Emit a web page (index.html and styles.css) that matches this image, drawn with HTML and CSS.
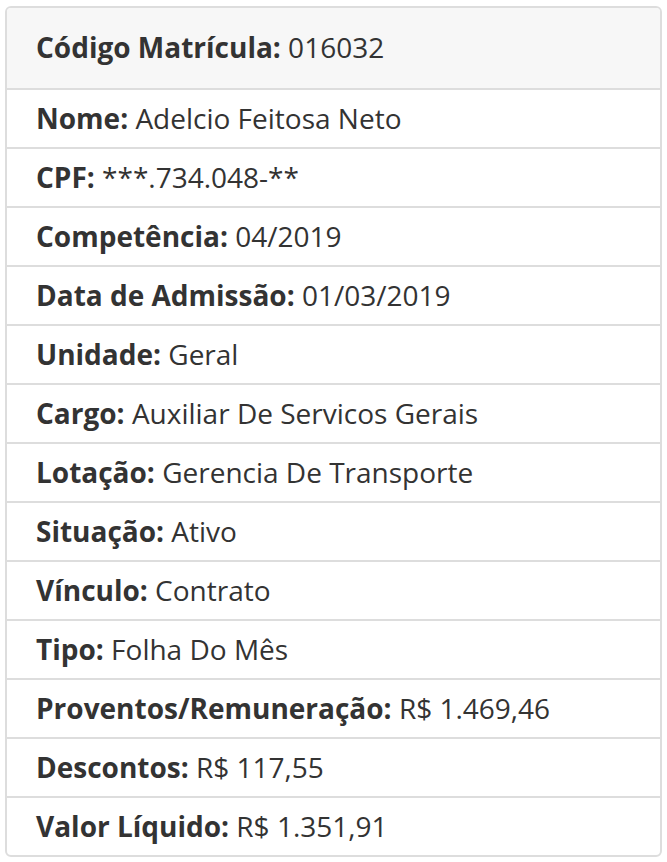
FILE: index.html
```html
<!DOCTYPE html>
<html lang="pt-BR">
<head>
<meta charset="utf-8">
<title>Contracheque</title>
<link rel="stylesheet" href="styles.css">
</head>
<body>
<div class="card">
  <div class="card-header"><b>Código Matrícula:</b> 016032</div>
  <ul class="list">
    <li class="item"><b>Nome:</b> Adelcio Feitosa Neto</li>
    <li class="item"><b>CPF:</b> ***.734.048-**</li>
    <li class="item"><b>Competência:</b> 04/2019</li>
    <li class="item"><b>Data de Admissão:</b> 01/03/2019</li>
    <li class="item"><b>Unidade:</b> Geral</li>
    <li class="item"><b>Cargo:</b> Auxiliar De Servicos Gerais</li>
    <li class="item"><b>Lotação:</b> Gerencia De Transporte</li>
    <li class="item"><b>Situação:</b> Ativo</li>
    <li class="item"><b>Vínculo:</b> Contrato</li>
    <li class="item"><b>Tipo:</b> Folha Do Mês</li>
    <li class="item"><b>Proventos/Remuneração:</b> R$ 1.469,46</li>
    <li class="item"><b>Descontos:</b> R$ 117,55</li>
    <li class="item"><b>Valor Líquido:</b> R$ 1.351,91</li>
  </ul>
</div>
</body>
</html>
```
FILE: styles.css
```css
html, body {
  margin: 0;
  padding: 0;
  background: #ffffff;
}
body {
  padding: 6px 5px 0 5px;
  font-family: "Open Sans", "Noto Sans", sans-serif;
  font-size: 28px;
  line-height: 37px;
  color: #333333;
}
.card {
  width: 657px;
  box-sizing: border-box;
  border: 2px solid #dddddd;
  border-radius: 6px;
  overflow: hidden;
  background: #ffffff;
}
.card-header {
  background: #f7f7f7;
  padding: 21px 29px 22px 29px;
  border-bottom: 2px solid #dddddd;
}
.list {
  list-style: none;
  margin: 0;
  padding: 0;
}
.item {
  padding: 10px 29px 10px 29px;
  border-top: 2px solid #dddddd;
}
.item:first-child {
  border-top: 0;
}
b {
  font-weight: 700;
}
```
